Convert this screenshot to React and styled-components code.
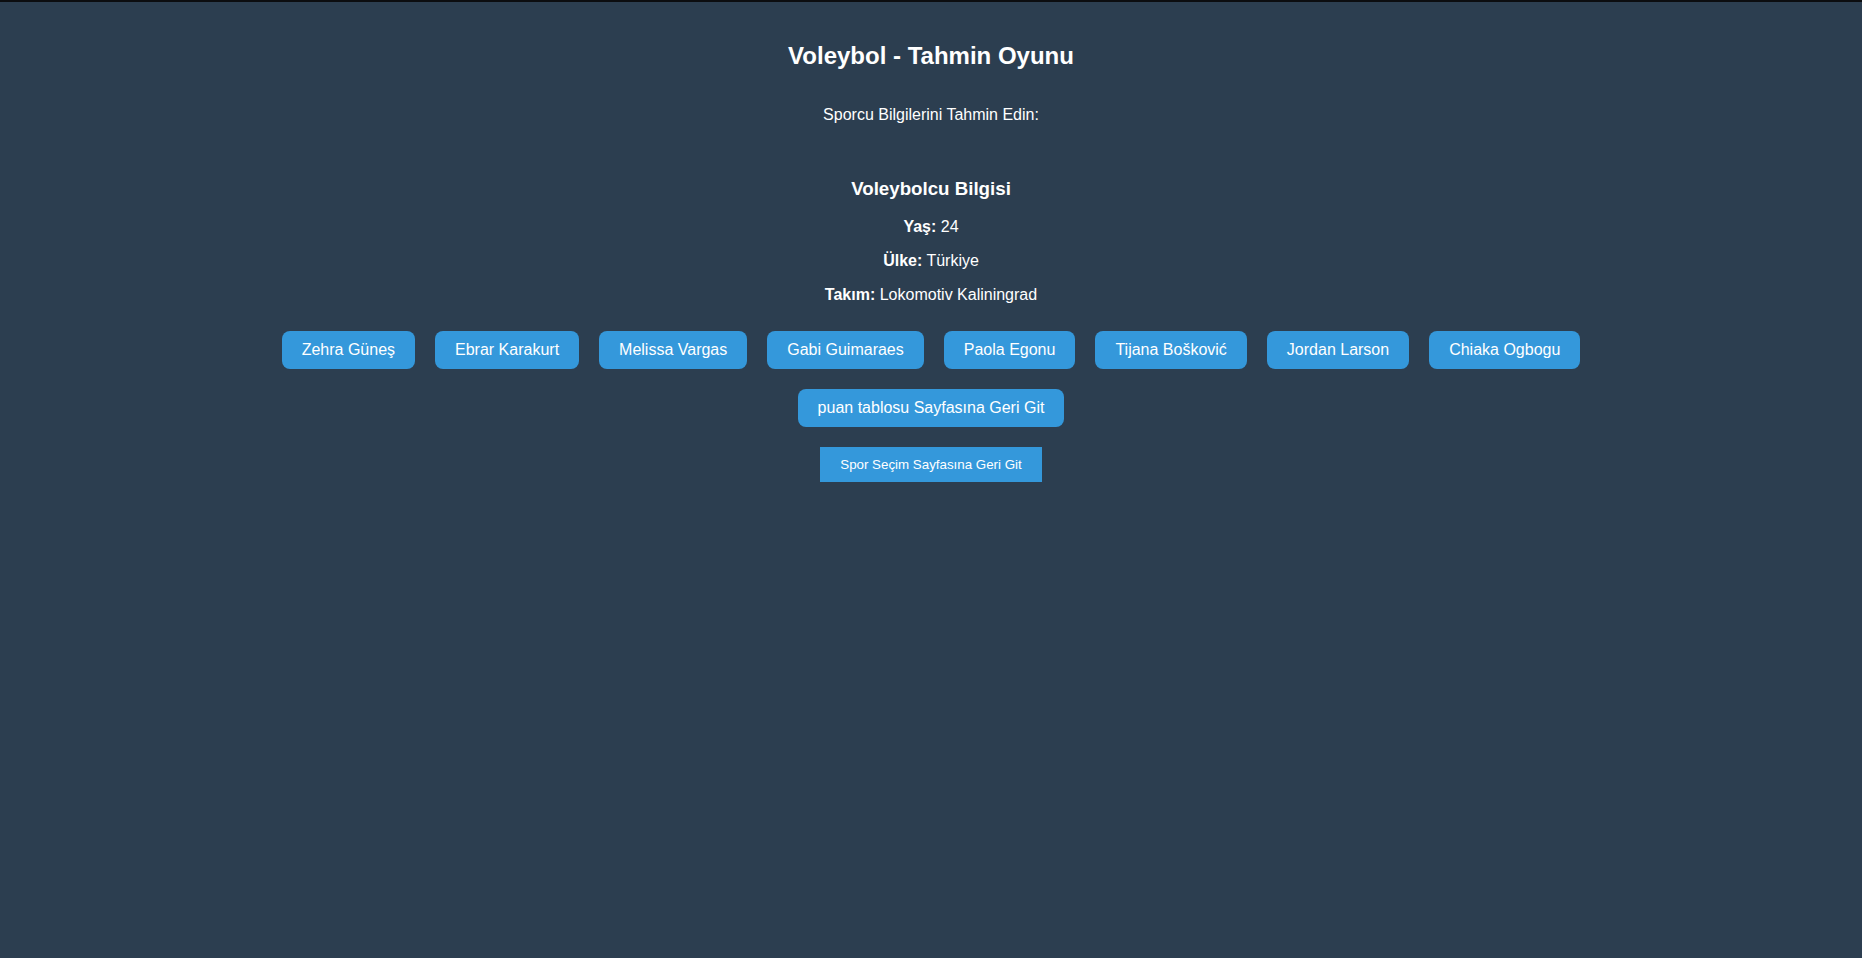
import styled, { createGlobalStyle } from "styled-components";

const GlobalStyle = createGlobalStyle`
  html, body {
    margin: 0;
    padding: 0;
    background-color: #2c3e50;
  }
  * {
    box-sizing: border-box;
  }
`;

const Page = styled.div`
  min-height: 100vh;
  background-color: #2c3e50;
  border-top: 2px solid #0c0d10;
  padding: 40px 20px;
  display: flex;
  flex-direction: column;
  align-items: center;
  color: #ffffff;
  font-family: "Liberation Sans", Arial, sans-serif;
  text-align: center;
`;

const Title = styled.h2`
  margin: 0 0 36px;
  font-size: 24px;
  font-weight: bold;
`;

const Subtitle = styled.p`
  margin: 0 0 54px;
  font-size: 16px;
`;

const InfoCard = styled.div`
  display: flex;
  flex-direction: column;
  align-items: center;
  gap: 16px;
`;

const InfoTitle = styled.h3`
  margin: 0 0 2px;
  font-size: 18.72px;
  font-weight: bold;
`;

const InfoRow = styled.p`
  margin: 0;
  font-size: 16px;
`;

const ButtonRow = styled.div`
  display: flex;
  flex-wrap: wrap;
  justify-content: center;
  gap: 20px;
  margin-top: 27px;
`;

const Button = styled.button`
  background-color: #3498db;
  color: #ffffff;
  border: none;
  cursor: pointer;
  font-family: "Liberation Sans", Arial, sans-serif;
  font-size: ${(p) => (p.$small ? "13.33px" : "16px")};
  padding: 10px 20px;
  border-radius: ${(p) => (p.$square ? "0" : "8px")};
  line-height: normal;
  &:hover {
    background-color: #2980b9;
  }
`;

const BackWrap = styled.div`
  margin-top: 20px;
`;

const players = [
  "Zehra Güneş",
  "Ebrar Karakurt",
  "Melissa Vargas",
  "Gabi Guimaraes",
  "Paola Egonu",
  "Tijana Bošković",
  "Jordan Larson",
  "Chiaka Ogbogu",
];

const info = [
  { label: "Yaş:", value: "24" },
  { label: "Ülke:", value: "Türkiye" },
  { label: "Takım:", value: "Lokomotiv Kaliningrad" },
];

const App = () => {
  return (
    <>
      <GlobalStyle />
      <Page>
        <Title>Voleybol - Tahmin Oyunu</Title>
        <Subtitle>Sporcu Bilgilerini Tahmin Edin:</Subtitle>
        <InfoCard>
          <InfoTitle>Voleybolcu Bilgisi</InfoTitle>
          {info.map((row) => (
            <InfoRow key={row.label}>
              <strong>{row.label}</strong> {row.value}
            </InfoRow>
          ))}
        </InfoCard>
        <ButtonRow>
          {players.map((name) => (
            <Button key={name}>{name}</Button>
          ))}
        </ButtonRow>
        <BackWrap>
          <Button>puan tablosu Sayfasına Geri Git</Button>
        </BackWrap>
        <BackWrap>
          <Button $small $square>
            Spor Seçim Sayfasına Geri Git
          </Button>
        </BackWrap>
      </Page>
    </>
  );
};

export default App;
